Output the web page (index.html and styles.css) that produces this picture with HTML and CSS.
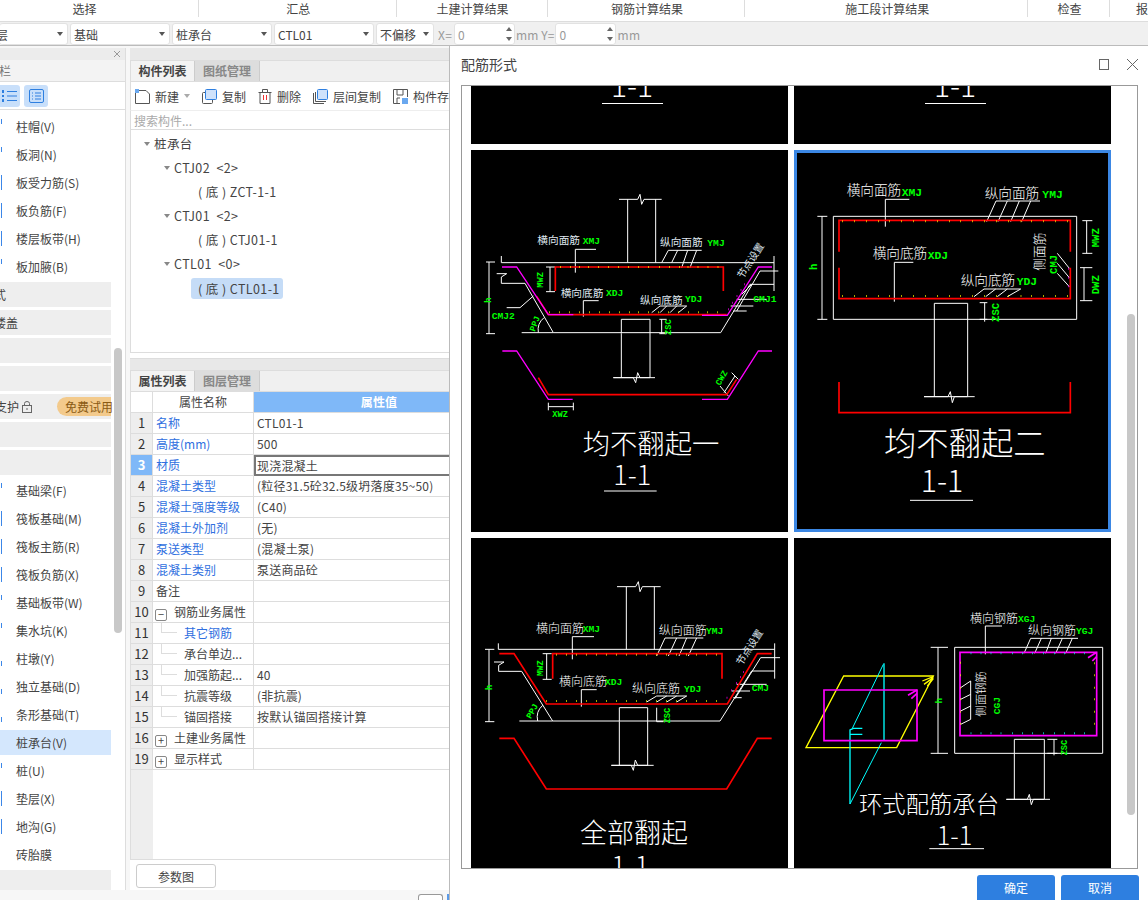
FILE: index.html
```html
<!DOCTYPE html>
<html lang="zh">
<head>
<meta charset="utf-8">
<title>配筋形式</title>
<link rel="stylesheet" href="styles.css">
</head>
<body>
<div class="menu">
  <div class="m m1">选择</div><div class="m m2">汇总</div><div class="m m3">土建计算结果</div><div class="m m4">钢筋计算结果</div><div class="m m5">施工段计算结果</div><div class="m m6">检查</div><div class="m m7">报</div>
</div>
<div class="bar">
  <div class="sel s1"><span class="cut4">层</span><i></i></div>
  <div class="sel s2"><span>基础</span><i></i></div>
  <div class="sel s2"><span>桩承台</span><i></i></div>
  <div class="sel s2"><span>CTL01</span><i></i></div>
  <div class="sel s3"><span>不偏移</span><i></i></div>
  <span class="lbl lx">X=</span>
  <div class="spin"><span>0</span><b></b></div>
  <span class="lbl lm">mm Y=</span>
  <div class="spin"><span>0</span><b></b></div>
  <span class="lbl">mm</span>
</div>
<div class="main">
  <aside class="side">
    <div class="side-top"><svg width="8" height="8" viewBox="0 0 8 8"><path d="M1 1L7 7M7 1L1 7" stroke="#999" fill="none"/></svg></div>
    <div class="side-title"><span class="cut1">栏</span></div>
    <div class="side-icons">
      <span class="tog t1"><svg width="16" height="14" viewBox="0 0 16 14"><path d="M5 2.500H15M5 7H15M5 11.500H15" stroke="#2e7fe0" fill="none"/><path d="M0 1h2v3H0zM0 6h2v2H0zM0 10h2v3H0z" fill="#2e7fe0"/></svg></span>
      <span class="tog t2"><svg width="15" height="14" viewBox="0 0 15 14"><rect x=".5" y=".5" width="14" height="13" rx="1.500" fill="none" stroke="#2e7fe0"/><path d="M3 4h1M6 4h6M3 7h1M6 7h6M3 10h1M6 10h6" stroke="#2e7fe0" fill="none"/></svg></span>
    </div>
    <ul class="items">
      <li><u class="sh"></u>柱帽(V)</li><li><u class="sh"></u>板洞(N)</li><li><u></u>板受力筋(S)</li><li><u></u>板负筋(F)</li><li><u></u>楼层板带(H)</li><li><u class="sh"></u>板加腋(B)</li>
    </ul>
    <div class="grp"><span class="cut6">式</span></div><div class="grp"><span class="cut6">楼盖</span></div><div class="grp"></div><div class="grp"></div>
    <div class="grp"><span class="cut5">支护</span><svg class="lock" width="10" height="12" viewBox="0 0 10 12"><rect x=".5" y="4.500" width="9" height="7" fill="none" stroke="#666"/><path d="M2.500 4.500V2.500a2.500 2 0 0 1 5 0v2M5 7v2" fill="none" stroke="#666"/></svg><em>免费试用</em></div>
    <div class="grp"></div><div class="grp"></div>
    <ul class="items items2">
      <li><u class="sh"></u>基础梁(F)</li><li><u></u>筏板基础(M)</li><li><u></u>筏板主筋(R)</li><li><u></u>筏板负筋(X)</li><li><u class="sh"></u>基础板带(W)</li><li><u class="sh"></u>集水坑(K)</li><li><u class="sh lo"></u>柱墩(Y)</li><li><u class="sh lo"></u>独立基础(D)</li><li><u class="sh lo"></u>条形基础(T)</li><li class="on">桩承台(V)</li><li><u class="sh"></u>桩(U)</li><li><u></u>垫层(X)</li><li><u></u>地沟(G)</li><li>砖胎膜</li>
    </ul>
    <div class="grp last"></div>
    <div class="scroll"></div>
  </aside>
  <section class="mid">
    <div class="strip"></div>
    <div class="tabs"><span class="tab act">构件列表</span><span class="tab">图纸管理</span></div>
    <div class="tools">
      <span class="tool"><svg width="15" height="15" viewBox="0 0 15 15"><path d="M3.500 1.500H11L14.500 5V14.500H.5V4" fill="none" stroke="#555"/><path d="M0 0h4v4H0z" fill="#6aa8ef"/></svg>新建<i></i></span>
      <span class="tool"><svg width="15" height="15" viewBox="0 0 15 15"><rect x=".5" y="3.500" width="10" height="11" rx="1" fill="none" stroke="#555"/><rect x="3.500" y=".5" width="11" height="10" rx="1" fill="#cfe2fb" stroke="#2e7fe0"/></svg>复制</span>
      <span class="tool"><svg width="14" height="15" viewBox="0 0 14 15"><path d="M.5 3.500h13M4.500 3V.5h5V3M2 3.500V14.500H12V3.500" fill="none" stroke="#555"/><path d="M5.500 6v5M8.500 6v5" stroke="#e33" fill="none"/></svg>删除</span>
      <span class="tool"><svg width="15" height="15" viewBox="0 0 15 15"><path d="M.5 4V14.500H11M2.500 3V12.500H13" fill="none" stroke="#555"/><rect x="4.500" y=".5" width="10" height="10" rx="1" fill="#cfe2fb" stroke="#2e7fe0"/></svg>层间复制</span>
      <span class="tool"><svg width="15" height="15" viewBox="0 0 15 15"><path d="M7 14.500H.5V.5H14.500V8M4 1v5h6V1M4 14V9h3" fill="none" stroke="#555"/><rect x="9" y="9" width="6" height="6" fill="#6aa8ef"/></svg>构件存</span>
    </div>
    <div class="search">搜索构件...</div>
    <div class="tree">
      <div class="n l0"><i></i>桩承台</div>
      <div class="n l1"><i></i>CTJ02  &lt;2&gt;</div>
      <div class="n l2">( 底 ) ZCT-1-1</div>
      <div class="n l1"><i></i>CTJ01  &lt;2&gt;</div>
      <div class="n l2">( 底 ) CTJ01-1</div>
      <div class="n l1"><i></i>CTL01  &lt;0&gt;</div>
      <div class="n l2"><span class="cur">( 底 ) CTL01-1</span></div>
    </div>
    <div class="strip s2nd"></div>
    <div class="tabs"><span class="tab act">属性列表</span><span class="tab">图层管理</span></div>
    <div class="grid">
      <div class="r head"><span class="c0"></span><span class="c1">属性名称</span><span class="c2">属性值</span></div>
      <div class="r"><span class="c0">1</span><span class="c1 blue">名称</span><span class="c2">CTL01-1</span></div>
      <div class="r"><span class="c0">2</span><span class="c1 blue">高度(mm)</span><span class="c2">500</span></div>
      <div class="r sel3"><span class="c0">3</span><span class="c1 blue">材质</span><span class="c2">现浇混凝土</span></div>
      <div class="r"><span class="c0">4</span><span class="c1 blue">混凝土类型</span><span class="c2">(粒径31.5砼32.5级坍落度35~50)</span></div>
      <div class="r"><span class="c0">5</span><span class="c1 blue">混凝土强度等级</span><span class="c2">(C40)</span></div>
      <div class="r"><span class="c0">6</span><span class="c1 blue">混凝土外加剂</span><span class="c2">(无)</span></div>
      <div class="r"><span class="c0">7</span><span class="c1 blue">泵送类型</span><span class="c2">(混凝土泵)</span></div>
      <div class="r"><span class="c0">8</span><span class="c1 blue">混凝土类别</span><span class="c2">泵送商品砼</span></div>
      <div class="r"><span class="c0">9</span><span class="c1">备注</span><span class="c2"></span></div>
      <div class="r"><span class="c0">10</span><span class="c1"><s class="box">−</s>钢筋业务属性</span><span class="c2"></span></div>
      <div class="r"><span class="c0">11</span><span class="c1 sub blue"><q></q>其它钢筋</span><span class="c2"></span></div>
      <div class="r"><span class="c0">12</span><span class="c1 sub"><q></q>承台单边...</span><span class="c2"></span></div>
      <div class="r"><span class="c0">13</span><span class="c1 sub"><q></q>加强筋起...</span><span class="c2">40</span></div>
      <div class="r"><span class="c0">14</span><span class="c1 sub"><q></q>抗震等级</span><span class="c2">(非抗震)</span></div>
      <div class="r"><span class="c0">15</span><span class="c1 sub"><q></q>锚固搭接</span><span class="c2">按默认锚固搭接计算</span></div>
      <div class="r"><span class="c0">16</span><span class="c1"><s class="box">+</s>土建业务属性</span><span class="c2"></span></div>
      <div class="r"><span class="c0">19</span><span class="c1"><s class="box">+</s>显示样式</span><span class="c2"></span></div>
      <div class="rest"><span class="c0"></span></div>
    </div>
    <div class="foot"><button class="param">参数图</button></div>
  </section>
  <section class="dlg">
    <div class="dlg-head"><span>配筋形式</span>
      <svg class="win" width="50" height="13" viewBox="0 0 50 13"><rect x="6.500" y="1.500" width="9" height="10" fill="none" stroke="#666"/><path d="M34 1L45 12M45 1L34 12" fill="none" stroke="#666"/></svg>
    </div>
    <div class="well">
      <div class="cells">
        <div class="cell stub"><svg width="317" height="58" viewBox="0 0 317 58"><text class="t-w" x="161" y="11" font-size="30" text-anchor="middle">1-1</text><path d="M131 17.500H192" stroke="#fff" fill="none"/></svg></div>
        <div class="cell stub"><svg width="317" height="58" viewBox="0 0 317 58"><text class="t-w" x="161" y="11" font-size="30" text-anchor="middle">1-1</text><path d="M131 17.500H192" stroke="#fff" fill="none"/></svg></div>

        <div class="cell tall"><svg width="317" height="382" viewBox="3 -3 951 1146">
          <g class="w3">
            <path d="M447 145H503L510 130L515 160L522 145H575M473 145V335M557 145V335M94 335H912M94 315V335M912 315V420"/>
            <path d="M48 333H75M48 548H75M57 333V548M228 348H255M228 422H255M240 348V422"/>
            <path d="M80 368H110L94 378V397H165L250 545H155M250 545H752L840 400H912M800 480L870 360H925M110 470H150L190 435"/>
            <path d="M205 545A48 48 0 0 1 222 500"/>
            <path d="M454 548V505H540V680H430H490L497 695L503 665L510 680H555M454 680V548M568 505H590M568 548H590M575 505V548"/>
            <path d="M316 365V295H378M340 497V449H386M575 335L595 298H695M605 335L623 298M635 350L653 298M660 350L680 298M545 485L570 465H650M570 485L590 465M600 485L620 465M625 485L650 465"/>
            <path d="M800 445H890M782 465H850M790 480H830M815 430L845 400"/>
            <path d="M235 755V778M310 755V778M235 767H310M750 705L775 735M785 665L805 685M762 725L795 675"/>
            <path d="M402 1020H560"/>
          </g>
          <g class="r9"><path d="M256 420V348H760V420"/><path d="M200 436L235 491H770"/><path d="M205 680L235 731H770L800 685"/></g>
          <g class="m6"><path d="M96 348H140L235 491H310"/><path d="M696 493H772L865 348H906"/><path d="M97 600H140L235 745H308"/><path d="M696 745H772L865 600H906"/></g>
          <path class="dots" d="M270 348h2M300 348h2M327 348h2M355 348h2M385 348h2M415 348h2M445 348h2M475 348h2M505 348h2M535 348h2M567 348h2M597 348h2M627 348h2M653 348h2M683 348h2M713 348h2M743 348h2M238 484h2M268 484h2M298 484h2M328 484h2M358 484h2M388 484h2M418 484h2M448 484h2M478 484h2M505 484h2M535 484h2M565 484h2M595 484h2M625 484h2M655 484h2M685 484h2M712 484h2M742 484h2"/>
          <path class="dots mg" d="M775 475h2M787 455h2M800 435h2M812 417h2M822 400h2"/>
          <text class="t-c" x="202" y="278" font-size="32">横向面筋</text><text class="t-g" x="338" y="280" font-size="29">XMJ</text>
          <text class="t-c" x="570" y="284" font-size="32">纵向面筋</text><text class="t-g" x="712" y="286" font-size="29">YMJ</text>
          <text class="t-c" x="272" y="437" font-size="32">横向底筋</text><text class="t-g" x="408" y="435" font-size="29">XDJ</text>
          <text class="t-c" x="510" y="458" font-size="32">纵向底筋</text><text class="t-g" x="645" y="454" font-size="29">YDJ</text>
          <text class="t-g" x="850" y="453" font-size="29">CMJ1</text><text class="t-g" x="65" y="503" font-size="29">CMJ2</text>
          <text class="t-g" transform="translate(220 410) rotate(-90)" font-size="26">MWZ</text>
          <text class="t-g" transform="translate(62 455) rotate(-90)" font-size="26">h</text>
          <text class="t-g" transform="translate(194 543) rotate(-70)" font-size="26">PPJ</text>
          <text class="t-g" transform="translate(602 552) rotate(-90)" font-size="26">ZSC</text>
          <text class="t-g" transform="translate(750 705) rotate(-60)" font-size="26">CWZ</text>
          <text class="t-g" x="247" y="797" font-size="26">XWZ</text>
          <text class="t-c" transform="translate(818 385) rotate(-57)" font-size="30">节点设置</text>
          <text class="t-w" x="338" y="910" font-size="82">均不翻起一</text>
          <text class="t-w" x="430" y="1003" font-size="81">1-1</text>
        </svg></div>

        <div class="cell tall chosen"><svg width="311" height="376" viewBox="9 9 933 1128">
          <g class="w3">
            <path d="M118 199H848V508H118ZM70 199H100M70 508H100M84 199V508M865 212H895M865 310H895M878 212V310M858 353H895M858 452H895M870 353V452M557 458H580M557 508H580M572 458V515"/>
            <path d="M421 510V460H521V740H390M421 740V510M521 740H542M390 740H462L469 725L475 758L481 740H521"/>
            <path d="M274 230V148H346M301 455V337H358M578 215L606 153H738M612 215L640 153M650 215L676 153M683 215L710 153M540 440L570 417H680M575 440L605 417M610 440L640 417M640 440L680 417"/>
            <path d="M790 310L826 355M790 340L826 383M790 370L826 410"/>
            <path d="M348 1051H537"/>
          </g>
          <g class="r9"><path d="M135 305V211H829V305"/><path d="M135 353V446H829V353"/><path d="M135 696V788H829V696"/></g>
          <path class="dots" d="M144 214h2M180 214h2M216 214h2M252 214h2M286 214h2M322 214h2M358 214h2M394 214h2M430 214h2M466 214h2M499 214h2M535 214h2M571 214h2M607 214h2M643 214h2M680 214h2M712 214h2M748 214h2M784 214h2M820 214h2M144 438h2M180 438h2M216 438h2M252 438h2M286 438h2M322 438h2M358 438h2M394 438h2M430 438h2M466 438h2M499 438h2M535 438h2M571 438h2M607 438h2M643 438h2M680 438h2M712 438h2M748 438h2M784 438h2M820 438h2"/>
          <path class="dots mg" d="M823 356h2M823 383h2M823 409h2"/>
          <text class="t-w" x="158" y="136" font-size="41">横向面筋</text><text class="t-g" x="323" y="137" font-size="34">XMJ</text>
          <text class="t-w" x="572" y="145" font-size="41">纵向面筋</text><text class="t-g" x="745" y="143" font-size="34">YMJ</text>
          <text class="t-w" x="236" y="325" font-size="41">横向底筋</text><text class="t-g" x="401" y="326" font-size="34">XDJ</text>
          <text class="t-w" x="500" y="405" font-size="41">纵向底筋</text><text class="t-g" x="668" y="405" font-size="34">YDJ</text>
          <text class="t-w" transform="translate(750 362) rotate(-90)" font-size="38">侧面筋</text>
          <text class="t-g" transform="translate(788 372) rotate(-90)" font-size="32">CMJ</text>
          <text class="t-g" transform="translate(68 360) rotate(-90)" font-size="32">h</text>
          <text class="t-g" transform="translate(916 292) rotate(-90)" font-size="32">MWZ</text>
          <text class="t-g" transform="translate(916 433) rotate(-90)" font-size="32">DWZ</text>
          <text class="t-g" transform="translate(616 516) rotate(-90)" font-size="32">ZSC</text>
          <text class="t-w" x="270" y="915" font-size="97">均不翻起二</text>
          <text class="t-w" x="380" y="1026" font-size="91">1-1</text>
        </svg></div>

        <div class="cell bot"><svg width="317" height="332" viewBox="3 6 951 996">
          <g class="w3">
            <path d="M441 152H497L505 137L510 167L517 152H572M469 152V340M553 152V340M85 340H914M85 322V340M914 322V428"/>
            <path d="M45 340H73M45 557H73M57 340V557M218 353H245M218 430H245M230 353V430"/>
            <path d="M72 378H102L86 388V406H155L248 555H148M248 555H750L845 405H914M795 488L872 365H930"/>
            <path d="M203 555A48 48 0 0 1 218 508"/>
            <path d="M448 557V515H533V688H424H484L490 703L496 672L503 688H551M448 688V557M560 515V557H580"/>
            <path d="M307 370V302H372M334 512V461H380M560 360L585 306H700M595 360L620 306M627 360L650 306M655 360L680 306M530 498L560 480H650M560 498L590 480M590 498L620 480M620 498L650 480M800 445H890M785 465H840M790 485H815"/>
          </g>
          <g class="r9"><path d="M248 428V353H756V428"/><path d="M88 353H132L229 504H772L862 353H905"/><path d="M88 607H132L229 759H770L862 607H905"/></g>
          <path class="dots" d="M258 356h2M288 356h2M318 356h2M348 356h2M378 356h2M408 356h2M438 356h2M468 356h2M498 356h2M528 356h2M558 356h2M588 356h2M618 356h2M648 356h2M678 356h2M708 356h2M738 356h2M228 495h2M258 495h2M288 495h2M318 495h2M348 495h2M378 495h2M408 495h2M438 495h2M468 495h2M498 495h2M528 495h2M558 495h2M588 495h2M618 495h2M648 495h2M678 495h2M708 495h2M738 495h2"/>
          <path class="dots mg" d="M770 485h2M783 463h2M798 441h2M811 423h2M820 408h2"/>
          <text class="t-w" x="198" y="290" font-size="36">横向面筋</text><text class="t-g" x="338" y="288" font-size="29">XMJ</text>
          <text class="t-w" x="566" y="296" font-size="36">纵向面筋</text><text class="t-g" x="708" y="294" font-size="29">YMJ</text>
          <text class="t-w" x="267" y="450" font-size="36">横向底筋</text><text class="t-g" x="405" y="448" font-size="29">XDJ</text>
          <text class="t-w" x="486" y="472" font-size="36">纵向底筋</text><text class="t-g" x="642" y="468" font-size="29">YDJ</text>
          <text class="t-g" x="845" y="465" font-size="29">CMJ</text>
          <text class="t-g" transform="translate(218 420) rotate(-90)" font-size="26">MWZ</text>
          <text class="t-g" transform="translate(66 462) rotate(-90)" font-size="26">h</text>
          <text class="t-g" transform="translate(182 550) rotate(-60)" font-size="26">PPJ</text>
          <text class="t-g" transform="translate(600 562) rotate(-90)" font-size="26">ZSC</text>
          <text class="t-c" transform="translate(815 390) rotate(-57)" font-size="30">节点设置</text>
          <text class="t-w" x="330" y="922" font-size="81">全部翻起</text>
          <text class="t-w" x="424" y="1020" font-size="81">1-1</text>
        </svg></div>

        <div class="cell bot"><svg width="317" height="332" viewBox="0 6 951 996">
          <g class="y3"><path d="M149 420H418L308 635H36Z"/><path d="M385 435L418 422M390 445L418 425M400 450L418 428"/></g>
          <g class="c3"><path d="M270 382V612"/><path class="thin" d="M268 385L175 577M168 804L262 620"/><path d="M168 804V582L178 577H205M168 595H205"/></g>
          <g class="m6t"><path d="M90 462H369V614H90Z"/><path d="M342 478L369 462M352 488L369 472"/></g>
          <g class="w3">
            <path d="M482 334H926V652H482ZM410 334H462M410 652H462M432 334V652M760 610H790M760 652H790M780 610V658"/>
            <path d="M661 652V610H751V790H637M661 790V652M751 790H768M637 790H700L706 775L712 806L718 790H751"/>
            <path d="M574 355V270H624M690 352L710 307H852M722 352L742 307M755 352L772 307M785 352L805 307M815 352L835 307"/>
            <path d="M500 455L530 435M500 490L530 475M500 525L530 510M500 565L530 550M530 435V550"/>
            <path d="M406 938H570"/>
          </g>
          <g class="m6t"><path d="M498 349H908V599H498Z"/><path d="M882 365L908 349M895 375L908 362"/></g>
          <path class="dots cy" d="M530 352h2M560 352h2M590 352h2M620 352h2M655 352h2M685 352h2M715 352h2M748 352h2M780 352h2M810 352h2M840 352h2M870 352h2M530 592h2M560 592h2M590 592h2M620 592h2M655 592h2M685 592h2M715 592h2M748 592h2M780 592h2M810 592h2M840 592h2M870 592h2"/>
          <path class="dots" d="M498 380h2M498 418h2M498 455h2M498 490h2M498 527h2M498 563h2M900 382h2M900 418h2M900 455h2M900 490h2M900 527h2M900 563h2"/>
          <text class="t-w" x="528" y="260" font-size="36">横向钢筋</text><text class="t-g" x="672" y="258" font-size="29">XGJ</text>
          <text class="t-w" x="702" y="298" font-size="36">纵向钢筋</text><text class="t-g" x="846" y="294" font-size="29">YGJ</text>
          <text class="t-w" transform="translate(572 542) rotate(-90)" font-size="34">侧面钢筋</text>
          <text class="t-g" transform="translate(618 535) rotate(-90)" font-size="29">CGJ</text>
          <text class="t-g" transform="translate(444 502) rotate(-90)" font-size="26">h</text>
          <text class="t-g" transform="translate(820 658) rotate(-90)" font-size="26">ZSC</text>
          <text class="t-w" x="195" y="832" font-size="70">环式配筋承台</text>
          <text class="t-w" x="428" y="926" font-size="76">1-1</text>
        </svg></div>
      </div>
      <div class="vbar"></div>
    </div>
    <div class="acts"><button class="pri">确定</button><button class="pri">取消</button></div>
  </section>
</div>
<div class="peek"></div>
<div class="peek2"></div>
</body>
</html>
```
FILE: styles.css
```css
* { box-sizing: border-box; }
html, body { margin: 0; height: 900px; overflow: hidden; }
body { width: 1148px; background: #f7f7f7; color: #333; font: 12px "Noto Sans CJK SC", "Liberation Sans", sans-serif; position: relative; }

.menu { display: flex; height: 22px; background: #fff; border-bottom: 1px solid #ddd; padding-bottom: 4px; }
.m { text-align: center; line-height: 17px; border-right: 1px solid #ddd; color: #444; padding-left: 2px; }
.m1 { width: 199px; padding: 0 29px 0 0; }
.m2 { width: 198px; }
.m3 { width: 151px; }
.m4 { width: 198px; }
.m5 { width: 283px; }
.m6 { width: 82px; }
.m7 { flex: 1; border: 0; text-align: left; padding-left: 26px; }

.bar { height: 24px; background: #f0f0f0; border-bottom: 1px solid #bbb; display: flex; align-items: center; gap: 2px; padding-top: 1px; }
.sel { height: 22px; background: #fff; border: 1px solid #e2e2e2; border-radius: 3px; display: flex; align-items: center; justify-content: space-between; padding: 0 4px 0 3px; color: #444; }
.sel i, .tool i { width: 0; height: 0; border: 3px solid transparent; border-top: 4px solid #555; border-bottom: 0; }
.s1 { width: 68px; border-left: 0; padding-left: 0; }
.s2 { width: 100px; }
.s3 { width: 58px; }
.cut4 { margin-left: -4px; }
.cut1 { margin-left: -1px; }
.cut5 { margin-left: -5px; }
.cut6 { margin-left: -6px; }
.lbl { color: #999; white-space: nowrap; letter-spacing: .4px; }
.lx { width: 17px; padding-left: 2px; }
.lm { letter-spacing: .1px; }
.spin { width: 61px; height: 22px; margin: 0 -1px; background: #fff; border: 1px solid #e2e2e2; border-radius: 3px; padding-left: 3px; color: #999; display: flex; align-items: center; justify-content: space-between; }
.spin b { width: 6px; height: 14px; margin-right: 2px; display: flex; flex-direction: column; justify-content: space-between; }
.spin b::before, .spin b::after { content: ""; width: 0; height: 0; border: 3px solid transparent; }
.spin b::before { border-bottom: 4px solid #666; border-top: 0; }
.spin b::after { border-top: 4px solid #666; border-bottom: 0; }

.main { display: flex; height: 854px; }

.side { width: 126px; height: 842px; margin-top: 2px; background: #fff; border-right: 1px solid #ddd; position: relative; overflow: hidden; flex: none; }
.side-top { height: 12px; background: #ececec; display: flex; align-items: center; justify-content: flex-end; padding-right: 4px; }
.side-title { height: 22px; line-height: 21px; background: #f3f3f3; color: #777; border-bottom: 1px solid #ddd; }
.side-icons { height: 28px; border-bottom: 1px solid #ddd; display: flex; gap: 4px; padding-top: 3px; margin-left: -8px; }
.tog { height: 22px; background: #c8dffa; border-radius: 3px; display: flex; align-items: center; justify-content: center; }
.t1 { width: 28px; padding-left: 8px; }
.t2 { width: 24px; }
.items { list-style: none; margin: 0; padding: 4px 0 0; width: 111px; }
.items li { height: 25px; margin-bottom: 3px; line-height: 25px; padding-left: 16px; color: #444; position: relative; white-space: nowrap; }
.items li u { position: absolute; left: 0; top: 5px; width: 2px; height: 15px; border-right: 1px solid #3c87e8; }
.items li u.sh { height: 5px; }
.items li u.lo { top: 15px; }
.items li.on { background: #d4e7fd; }
.grp { width: 111px; height: 25px; margin-top: 3px; background: #eee; line-height: 25px; color: #444; display: flex; align-items: center; white-space: nowrap; }
.items + .grp { margin-top: 0; }
.lock { margin-left: 3px; }
.grp em { font-style: normal; margin-left: auto; width: 54px; height: 19px; line-height: 19px; padding-left: 8px; background: #f3ca8c; color: #8a5a14; border-radius: 10px 0 0 10px; }
.items2 { padding-top: 3px; }
.last { height: 30px; }
.scroll { position: absolute; left: 114px; top: 300px; width: 8px; height: 285px; background: #c8c8c8; border-radius: 4px; }

.mid { width: 320px; margin: 2px 0 0 4px; flex: none; display: flex; flex-direction: column; height: 842px; background: #fff; }
.strip { height: 12px; background: #e8e8e8; flex: none; }
.s2nd { margin-top: 5px; border-top: 1px solid #ddd; }
.tabs { height: 22px; flex: none; background: #f0f0f0; border-bottom: 1px solid #ddd; display: flex; border-top: 1px solid #ddd; }
.tab { width: 65px; line-height: 20px; text-align: center; background: #ddd; color: #888; font-weight: 700; border-right: 1px solid #ccc; }
.tab.act { background: #f3f3f3; color: #444; border-left: 1px solid #ddd; }
.tools { height: 28px; display: flex; align-items: center; gap: 12px; padding-left: 4px; white-space: nowrap; overflow: hidden; border-left: 1px solid #ddd; color: #444; flex: none; }
.tool { display: flex; align-items: center; gap: 5px; flex: none; }
.tool i { margin-left: 0; border-top-color: #aaa; }
.search { height: 20px; line-height: 19px; padding-left: 3px; color: #aaa; border-top: 1px solid #eee; border-bottom: 1px solid #ddd; border-left: 1px solid #ddd; flex: none; }
.tree { height: 223px; flex: none; padding-top: 2px; border-left: 1px solid #ddd; border-bottom: 1px solid #ddd; color: #444; }
.n { height: 24px; line-height: 24px; white-space: pre; display: flex; align-items: center; font-size: 12.500px; letter-spacing: .4px; }
.n i { width: 0; height: 0; border: 3.500px solid transparent; border-top: 4px solid #888; border-bottom: 0; margin-right: 4px; }
.l0 { padding-left: 13px; }
.l1 { padding-left: 33px; }
.l2 { padding-left: 67px; }
.cur { background: #c5dcf7; border-radius: 3px; margin-left: -7px; padding: 0 3px 0 7px; height: 21px; line-height: 21px; }

.grid { display: flex; flex-direction: column; flex: 1; min-height: 0; border-left: 1px solid #ddd; border-bottom: 1px solid #ddd; }
.r { display: flex; height: 21px; flex: none; }
.r span { border-bottom: 1px solid #ddd; line-height: 20px; white-space: nowrap; overflow: hidden; }
.c0 { width: 22px; flex: none; text-align: center; background: #eee; border-right: 1px solid #ddd; font-size: 13px; }
.c1 { width: 101px; flex: none; padding-left: 3px; border-right: 1px solid #ddd; color: #444; position: relative; }
.c2 { flex: 1; padding-left: 3px; color: #444; letter-spacing: .2px; }
.blue { color: #2f6fe0; }
.head .c0 { background: #fff; }
.head .c1 { text-align: center; padding: 0; }
.head .c2 { background: #7fb8f8; color: #fff; text-align: center; padding: 0 0 0 54px; font-weight: 700; }
.sel3 .c0 { background: #7fb8f8; color: #fff; font-weight: 700; }
.r.sel3 .c2 { border: 2px solid #777; border-right: 0; line-height: 17px; padding-left: 1px; }
.box { display: inline-block; width: 12px; height: 12px; border: 1px solid #888; border-radius: 2px; margin: 0 7px 0 -1px; line-height: 9px; text-align: center; text-decoration: none; vertical-align: -2px; font-size: 11px; }
.sub { padding-left: 31px; }
.sub q { position: absolute; left: 8px; top: -11px; width: 16px; height: 21px; border-left: 1px solid #ddd; border-bottom: 1px solid #ddd; quotes: none; }
.rest { flex: 1; display: flex; }
.rest .c0 { border: 0; }
.foot { height: 30px; flex: none; padding: 4px 0 0 6px; }
.param { width: 80px; height: 24px; padding: 0; background: #fff; border: 1px solid #ccc; border-radius: 3px; font: 12px "Noto Sans CJK SC", sans-serif; color: #444; }

.dlg { position: absolute; left: 449px; top: 46px; width: 699px; height: 854px; background: #fff; border-left: 1px solid #bbb; display: flex; flex-direction: column; z-index: 2; }
.dlg-head { height: 39px; flex: none; display: flex; align-items: center; justify-content: space-between; padding: 0 5px 4px 11px; color: #444; font-size: 14px; }
.win { margin-top: 1px; }
.well { width: 677px; height: 784px; margin-left: 11px; border: 1px solid #999; flex: none; position: relative; overflow: hidden; }
.cells { display: grid; grid-template-columns: 317px 317px; grid-auto-rows: min-content; gap: 6px; margin-left: 9px; }
.cell { background: #000; overflow: hidden; }
.cell svg { display: block; }
.stub { height: 58px; }
.tall { height: 382px; }
.chosen { border: 3px solid #3b87e4; }
.bot { height: 332px; }
.vbar { position: absolute; left: 665px; top: 228px; width: 8px; height: 501px; background: #c8c8c8; border-radius: 4px; }
.acts { display: flex; justify-content: flex-end; gap: 6px; padding: 6px 9px 0 0; }
.pri { width: 78px; height: 25px; padding: 0; border: 0; border-radius: 3px 3px 0 0; background: #2e7fe0; color: #fff; font: 12px "Noto Sans CJK SC", sans-serif; }
.peek { position: absolute; left: 418px; top: 894px; width: 25px; height: 6px; background: #fff; border: 1px solid #999; border-bottom: 0; border-radius: 3px 3px 0 0; }
.peek2 { position: absolute; left: 447px; top: 894px; width: 2px; height: 6px; background: #5a9ae8; }

svg .w3, svg .r9, svg .m6, svg .y3, svg .c3, svg .m6t { fill: none; }
.w3 { stroke: #fff; stroke-width: 3; }
.r9 { stroke: #f00; stroke-width: 5; }
.m6 { stroke: #f0f; stroke-width: 4; }
.m6t { stroke: #f0f; stroke-width: 5; }
.y3 { stroke: #ff0; stroke-width: 4; }
.c3 { stroke: #0ff; stroke-width: 4; }
.c3 .thin { stroke-width: 3; }
.dots { stroke: #ff0; stroke-width: 6; fill: none; }
.mg { stroke: #f0f; }
.cy { stroke: #0ff; }
.t-w { fill: #fff; font-family: "Noto Sans CJK SC", sans-serif; font-weight: 300; }
.t-c { fill: #dfe6ee; font-family: "Noto Sans CJK SC", sans-serif; }
.t-g { fill: #0f0; font-family: "Liberation Mono", monospace; font-weight: 700; }
```
